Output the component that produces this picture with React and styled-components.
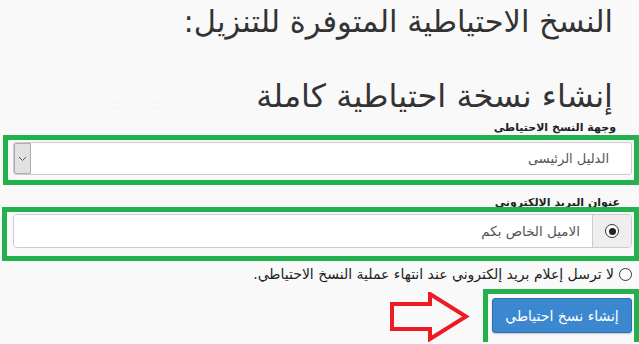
import React from "react";
import styled, { createGlobalStyle } from "styled-components";

const Global = createGlobalStyle`
  html, body { margin: 0; padding: 0; background: #f9f9f9; }
  body { font-family: "DejaVu Sans", sans-serif; color: #333; }
  * { box-sizing: border-box; }
`;

const Page = styled.div`
  direction: rtl;
  width: 639px;
  height: 344px;
  overflow: hidden;
  display: flex;
  flex-direction: column;
`;

const Title = styled.h2`
  margin: ${(p) => p.$m};
  padding: 0 26px 0 0;
  font-size: ${(p) => p.$fs}px;
  font-weight: normal;
  line-height: 40px;
  height: 40px;
  color: #333;
  white-space: nowrap;
  display: flex;
  justify-content: space-between;
  align-items: flex-end;
`;

const Watermark = styled.span`
  font-size: 6px;
  font-weight: bold;
  color: #ffffff;
  text-shadow: 0 0 2px #e8e8e8;
  line-height: 12px;
  white-space: nowrap;
  margin-left: 102px;
  margin-bottom: 6px;
`;

const Label = styled.div`
  font-size: 11px;
  font-weight: bold;
  line-height: 15px;
  padding-right: ${(p) => p.$pr || 24}px;
  margin-top: ${(p) => p.$mt || 0}px;
  color: #222;
`;

const GreenBox = styled.div`
  border: 5px solid #22b14c;
  margin: ${(p) => p.$m || "0 0 0 3px"};
  padding: ${(p) => p.$p || "2px 2px 5px 5px"};
  display: flex;
`;

const Select = styled.div`
  flex: 1;
  height: 33px;
  background: #fff;
  border: 1px solid #ccc;
  border-radius: 3px;
  display: flex;
  align-items: center;
  justify-content: space-between;
  font-size: 13px;
  color: #555;
  padding-right: 22px;
`;

const Arrow = styled.div`
  width: 17px;
  height: 100%;
  background: #e1e1e1;
  border: 1px solid #adadad;
  border-radius: 2px 0 0 2px;
  display: flex;
  align-items: center;
  justify-content: center;
`;

const InputGroup = styled.div`
  flex: 1;
  height: 34px;
  display: flex;
  border: 1px solid #ccc;
  border-radius: 4px;
  overflow: hidden;
`;

const Addon = styled.div`
  width: 39px;
  background: #eee;
  border-left: 1px solid #ccc;
  display: flex;
  align-items: center;
  justify-content: center;
`;

const Radio = styled.span`
  width: ${(p) => p.$s}px;
  height: ${(p) => p.$s}px;
  border-radius: 50%;
  border: 1px solid #333;
  background: #fff;
  display: inline-flex;
  align-items: center;
  justify-content: center;
  flex: none;
  &::after {
    content: "";
    display: ${(p) => (p.$on ? "block" : "none")};
    width: 7px;
    height: 7px;
    border-radius: 50%;
    background: #222;
  }
`;

const Field = styled.div`
  flex: 1;
  background: #fff;
  display: flex;
  align-items: center;
  font-size: 13.5px;
  color: #555;
  padding-right: 12px;
`;

const RadioLine = styled.div`
  display: flex;
  align-items: center;
  gap: 5px;
  padding-right: 7px;
  margin-top: 5px;
  font-size: 14px;
  line-height: 17px;
  color: #222;
`;

const BottomRow = styled.div`
  display: flex;
  align-items: flex-start;
  margin-top: 6px;
`;

const ButtonBox = styled.div`
  border: 5px solid #22b14c;
  border-bottom: none;
  padding: 4px 2px 9px 5px;
  width: 156px;
`;

const Button = styled.button`
  width: 140px;
  height: 35px;
  background: #3b88d0;
  border: 1px solid #2d6fae;
  border-radius: 3px;
  color: #fff;
  font-family: "DejaVu Sans", sans-serif;
  font-size: 14px;
  direction: rtl;
  padding: 0;
  box-shadow: 0 1px 2px rgba(0, 0, 0, 0.2);
`;

const ArrowSvg = styled.svg`
  margin-right: 12px;
  margin-top: 3px;
  flex: none;
`;

export default function App() {
  return (
    <>
      <Global />
      <Page>
        <Title $fs={30.5} $m="2px 0 0 0">النسخ الاحتياطية المتوفرة للتنزيل:</Title>
        <Title $fs={32} $m="34px 0 0 0">
          <span>إنشاء نسخة احتياطية كاملة</span>
          <Watermark>دعنا نرسم سويا خطوة أكثر بساطة ...</Watermark>
        </Title>
        <Label $mt={4} $pr={23}>وجهة النسخ الاحتياطى</Label>
        <GreenBox>
          <Select>
            <span>الدليل الرئيسى</span>
            <Arrow>
              <svg width="9" height="6" viewBox="0 0 9 6">
                <path d="M1 1 L4.5 4.5 L8 1" fill="none" stroke="#555" strokeWidth="1" />
              </svg>
            </Arrow>
          </Select>
        </GreenBox>
        <Label $mt={10} $pr={19}>عنوان البريد الالكترونى</Label>
        <GreenBox $m="-3px 0 0 2px" $p="2px 2px 8px 6px">
          <InputGroup>
            <Addon>
              <Radio $s={14} $on />
            </Addon>
            <Field>الاميل الخاص بكم</Field>
          </InputGroup>
        </GreenBox>
        <RadioLine>
          <Radio $s={13} />
          <span>لا ترسل إعلام بريد إلكتروني عند انتهاء عملية النسخ الاحتياطي.</span>
        </RadioLine>
        <BottomRow>
          <ButtonBox>
            <Button>إنشاء نسخ احتياطي</Button>
          </ButtonBox>
          <ArrowSvg width="82" height="50" viewBox="0 0 82 50">
            <path
              d="M41 12 L3 12 L3 37 L41 37 L41 47 L77 24.5 L41 2 Z"
              fill="none"
              stroke="#ed1c24"
              strokeWidth="4"
              strokeLinejoin="miter"
            />
          </ArrowSvg>
        </BottomRow>
      </Page>
    </>
  );
}
